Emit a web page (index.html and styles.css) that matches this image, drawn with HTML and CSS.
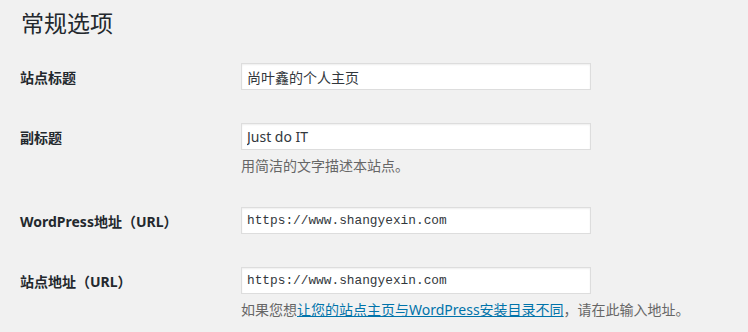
FILE: index.html
```html
<!DOCTYPE html>
<html lang="zh-CN">
<head>
    <meta charset="utf-8" />
    <title>常规选项</title>
    <link rel="stylesheet" href="styles.css">
</head>
<body>
    <div class="wrap">
        <h1>常规选项</h1>
        <form class="options">
            <div class="row">
                <label class="lbl" for="blogname">站点标题</label>
                <div class="field">
                    <input type="text" id="blogname" class="txt" value="尚叶鑫的个人主页" />
                </div>
            </div>
            <div class="row">
                <label class="lbl" for="blogdescription">副标题</label>
                <div class="field">
                    <input type="text" id="blogdescription" class="txt" value="Just do IT" />
                    <p class="desc">用简洁的文字描述本站点。</p>
                </div>
            </div>
            <div class="row">
                <label class="lbl" for="siteurl">WordPress地址（URL）</label>
                <div class="field">
                    <input type="url" id="siteurl" class="txt code" value="https://www.shangyexin.com" />
                </div>
            </div>
            <div class="row">
                <label class="lbl" for="home">站点地址（URL）</label>
                <div class="field">
                    <input type="url" id="home" class="txt code" value="https://www.shangyexin.com" />
                    <p class="desc">如果您想<a href="#">让您的站点主页与WordPress安装目录不同</a>，请在此输入地址。</p>
                </div>
            </div>
        </form>
    </div>
</body>
</html>
```

FILE: styles.css
```css
body {
    margin: 0;
    background-color: #f1f1f1;
    color: #23282d;
    font-family: "Noto Sans", "Noto Sans CJK SC", sans-serif;
    font-size: 14px;
}

.wrap {
    padding-left: 20px;
}

h1 {
    margin: 8px 0 9px 1px;
    font-size: 23px;
    font-weight: 400;
    line-height: 30px;
}

.row {
    display: flex;
    align-items: flex-start;
    padding: 16px 0 17px 0;
}

.lbl {
    width: 221px;
    height: 27px;
    flex-shrink: 0;
    padding-top: 2px;
    box-sizing: border-box;
    font-weight: bold;
    line-height: 25px;
}

.field {
    width: 350px;
}

.txt {
    display: block;
    width: 350px;
    height: 27px;
    margin: 0;
    padding: 0 5px;
    box-sizing: border-box;
    border: 1px solid #ddd;
    box-shadow: inset 0 1px 2px rgba(0, 0, 0, .07);
    background-color: #fff;
    color: #32373c;
    font-family: "Noto Sans", "Noto Sans CJK SC", sans-serif;
    font-size: 14px;
}

.code {
    font-family: "Liberation Mono", monospace;
    font-size: 12.8px;
}

.desc {
    margin: 7px 0 0 0;
    line-height: 17px;
    font-size: 14px;
    color: #666;
    white-space: nowrap;
}

.desc a {
    color: #0073aa;
}
```
